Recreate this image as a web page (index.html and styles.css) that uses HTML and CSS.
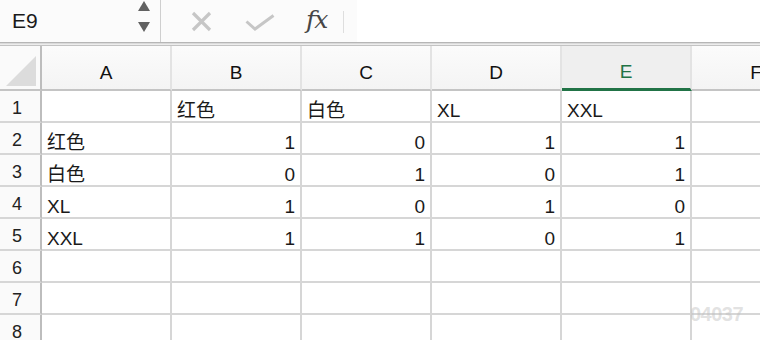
FILE: index.html
```html
<!DOCTYPE html>
<html lang="zh">
<head>
    <meta charset="UTF-8">
    <meta name="viewport" content="width=device-width, initial-scale=1.0">
    <title>Sheet</title>
    <link rel="stylesheet" href="styles.css">
</head>
<body>

    <div class="toolbar">
        <div class="namebox">
            <span class="ref">E9</span>
            <svg class="spin" width="14" height="34" viewBox="0 0 14 34">
                <polygon points="1,11 7,1 13,11" fill="#616161"/>
                <polygon points="1,22 13,22 7,32" fill="#616161"/>
            </svg>
        </div>
        <svg class="icon-cancel" width="23" height="21" viewBox="0 0 23 21">
            <path d="M3 2 L20 19 M20 2 L3 19" stroke="#c6c6c6" stroke-width="3.2" fill="none"/>
        </svg>
        <svg class="icon-enter" width="30" height="17" viewBox="0 0 30 17">
            <path d="M1.5 7.5 L10 15 L28.5 1.5" stroke="#c6c6c6" stroke-width="3" fill="none"/>
        </svg>
        <span class="fx">fx</span>
        <span class="sep"></span>
        <div class="formula"></div>
    </div>
    <div class="rule"></div>

    <div class="sheet">
        <div class="corner"><span class="tri"></span></div>
        <div class="colhead">A</div>
        <div class="colhead">B</div>
        <div class="colhead">C</div>
        <div class="colhead">D</div>
        <div class="colhead active">E</div>
        <div class="colhead">F</div>

        <div class="rowhead">1</div>
        <div class="cell"></div>
        <div class="cell">红色</div>
        <div class="cell">白色</div>
        <div class="cell">XL</div>
        <div class="cell">XXL</div>
        <div class="cell"></div>

        <div class="rowhead">2</div>
        <div class="cell">红色</div>
        <div class="cell num">1</div>
        <div class="cell num">0</div>
        <div class="cell num">1</div>
        <div class="cell num">1</div>
        <div class="cell"></div>

        <div class="rowhead">3</div>
        <div class="cell">白色</div>
        <div class="cell num">0</div>
        <div class="cell num">1</div>
        <div class="cell num">0</div>
        <div class="cell num">1</div>
        <div class="cell"></div>

        <div class="rowhead">4</div>
        <div class="cell">XL</div>
        <div class="cell num">1</div>
        <div class="cell num">0</div>
        <div class="cell num">1</div>
        <div class="cell num">0</div>
        <div class="cell"></div>

        <div class="rowhead">5</div>
        <div class="cell">XXL</div>
        <div class="cell num">1</div>
        <div class="cell num">1</div>
        <div class="cell num">0</div>
        <div class="cell num">1</div>
        <div class="cell"></div>

        <div class="rowhead">6</div>
        <div class="cell"></div>
        <div class="cell"></div>
        <div class="cell"></div>
        <div class="cell"></div>
        <div class="cell"></div>
        <div class="cell"></div>

        <div class="rowhead">7</div>
        <div class="cell"></div>
        <div class="cell"></div>
        <div class="cell"></div>
        <div class="cell"></div>
        <div class="cell"></div>
        <div class="cell"></div>

        <div class="rowhead">8</div>
        <div class="cell"></div>
        <div class="cell"></div>
        <div class="cell"></div>
        <div class="cell"></div>
        <div class="cell"></div>
        <div class="cell"></div>
    </div>

    <div class="watermark">04037</div>

</body>
</html>
```

FILE: styles.css
```css
body {
    margin: 0;
    width: 760px;
    height: 340px;
    overflow: hidden;
    position: relative;
    background: #ffffff;
    font-family: "Liberation Sans", "Noto Sans CJK SC", sans-serif;
    color: #1a1a1a;
}

/* formula bar */
.toolbar {
    height: 42px;
    display: flex;
    align-items: center;
    background: #fbfbfb;
    border-bottom: 1px solid #b6b6b6;
}
.namebox {
    width: 161px;
    height: 42px;
    display: flex;
    justify-content: space-between;
    border-right: 1px solid #cfcfcf;
    padding: 0 9px 0 12px;
    box-sizing: border-box;
}
.namebox .ref {
    font-size: 21px;
    line-height: 42px;
}
.icon-cancel {
    margin-left: 29px;
}
.icon-enter {
    margin-left: 32px;
    margin-top: 3px;
}
.fx {
    margin-left: 31px;
    font-family: "DejaVu Serif", serif;
    font-style: italic;
    font-size: 25px;
    color: #464646;
    line-height: 42px;
    margin-top: -3px;
    letter-spacing: -1px;
}
.sep {
    width: 1px;
    height: 22px;
    background: #dedede;
    margin-left: 16px;
    margin-top: 2px;
}
.formula {
    flex: 1;
    height: 42px;
    margin-left: 13px;
    background: #ffffff;
}
.rule {
    height: 1px;
    border-top: 1px solid #dadada;
    border-bottom: 1px solid #c3c3c3;
    background: #ececec;
}

/* grid */
.sheet {
    display: grid;
    grid-template-columns: 42px repeat(6, 130px);
    grid-template-rows: 45px repeat(8, 32px);
    font-size: 19px;
}
.sheet > div {
    box-sizing: border-box;
    overflow: hidden;
    white-space: nowrap;
}
.corner {
    background: #fafafa;
    border-right: 2px solid #bdbdbd;
    border-bottom: 2px solid #c4c4c4;
    display: flex;
    justify-content: flex-end;
    align-items: flex-end;
    padding: 0 4px 3px 0;
}
.corner .tri {
    width: 30px;
    height: 30px;
    background: #dcdcdc;
    clip-path: polygon(100% 0, 100% 100%, 0 100%);
}
.colhead {
    background: linear-gradient(#fbfbfb, #f4f4f4);
    border-right: 2px solid #e3e3e3;
    border-bottom: 2px solid #c4c4c4;
    display: flex;
    justify-content: center;
    align-items: center;
    padding-top: 10px;
    line-height: 19px;
    color: #111;
}
.colhead.active {
    background: #efefef;
    color: #217346;
    border-bottom: 3px solid #217346;
    padding-top: 9px;
}
.rowhead {
    background: #fafafa;
    border-right: 2px solid #bdbdbd;
    border-bottom: 2px solid #d6d6d6;
    padding-left: 12px;
    display: flex;
    align-items: flex-end;
    line-height: 19px;
    padding-bottom: 3px;
    font-size: 18px;
    color: #222;
}
.cell {
    border-right: 2px solid #d6d6d6;
    border-bottom: 2px solid #d6d6d6;
    padding: 0 5px 1px 5px;
    display: flex;
    align-items: flex-end;
    line-height: 19px;
}
.cell.num {
    justify-content: flex-end;
}

.watermark {
    position: absolute;
    left: 690px;
    top: 303px;
    font-size: 20px;
    font-weight: bold;
    color: rgba(190, 190, 190, 0.45);
    letter-spacing: -0.5px;
}
```
